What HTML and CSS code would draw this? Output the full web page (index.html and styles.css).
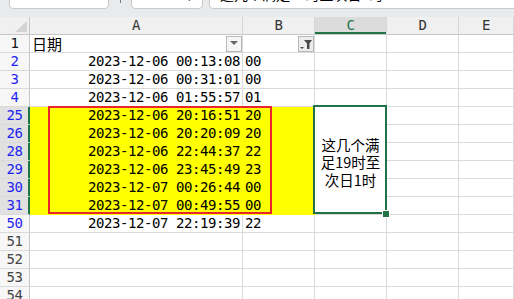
FILE: index.html
```html
<!DOCTYPE html>
<html>
<head>
<meta charset="utf-8">
<link rel="stylesheet" href="styles.css">
</head>
<body>
<div class="toolbar">
  <div class="box namebox"><span>C25</span></div>
  <div class="sep"></div>
  <div class="box fxbox"><span class="ic">✕</span><span class="ic">✓</span><span class="fx">fx</span></div>
  <div class="box formula"><span>这几个满足19时至次日1时</span></div>
</div>
<div class="sheet">
  <div class="c hd corner"><svg width="12" height="11" viewBox="0 0 12 11"><polygon points="12,0 12,11 0,11" fill="#d3d3d3"/></svg></div>
  <div class="c hd">A</div>
  <div class="c hd">B</div>
  <div class="c hd hsel">C</div>
  <div class="c hd">D</div>
  <div class="c hd">E</div>

  <div class="c rh dark">1</div>
  <div class="c a1"><span class="cjk">日期</span><span class="fbtn"><svg width="8" height="5" viewBox="0 0 8 5"><polygon points="0,0 8,0 4,4" fill="#666"/></svg></span></div>
  <div class="c b1"><span class="fbtn on"><svg width="14" height="14" viewBox="0 0 14 14"><polygon points="5,3 13,3 10.5,6.5 10.5,12 8,12 8,6.5" fill="#4a4a4a"/><polygon points="1,10 5,10 3,12" fill="#4a4a4a"/></svg></span></div>
  <div class="c"></div><div class="c"></div><div class="c"></div>

  <div class="c rh blue">2</div><div class="c a">2023-12-06 00:13:08</div><div class="c b">00</div><div class="c"></div><div class="c"></div><div class="c"></div>
  <div class="c rh blue">3</div><div class="c a">2023-12-06 00:31:01</div><div class="c b">00</div><div class="c"></div><div class="c"></div><div class="c"></div>
  <div class="c rh blue">4</div><div class="c a">2023-12-06 01:55:57</div><div class="c b">01</div><div class="c"></div><div class="c"></div><div class="c"></div>

  <div class="c rh blue sel">25</div><div class="c a y">2023-12-06 20:16:51</div><div class="c b y">20</div>
  <div class="c merged"><span class="cjk">这几个满<br>足19时至<br>次日1时</span><span class="handle"></span></div>
  <div class="c"></div><div class="c"></div>
  <div class="c rh blue sel">26</div><div class="c a y">2023-12-06 20:20:09</div><div class="c b y">20</div><div class="c"></div><div class="c"></div>
  <div class="c rh blue sel">28</div><div class="c a y">2023-12-06 22:44:37</div><div class="c b y">22</div><div class="c"></div><div class="c"></div>
  <div class="c rh blue sel">29</div><div class="c a y">2023-12-06 23:45:49</div><div class="c b y">23</div><div class="c"></div><div class="c"></div>
  <div class="c rh blue sel">30</div><div class="c a y">2023-12-07 00:26:44</div><div class="c b y">00</div><div class="c"></div><div class="c"></div>
  <div class="c rh blue sel">31</div><div class="c a y">2023-12-07 00:49:55</div><div class="c b y">00</div><div class="c"></div><div class="c"></div>

  <div class="c rh blue">50</div><div class="c a">2023-12-07 22:19:39</div><div class="c b">22</div><div class="c"></div><div class="c"></div><div class="c"></div>
  <div class="c rh">51</div><div class="c"></div><div class="c"></div><div class="c"></div><div class="c"></div><div class="c"></div>
  <div class="c rh">52</div><div class="c"></div><div class="c"></div><div class="c"></div><div class="c"></div><div class="c"></div>
  <div class="c rh">53</div><div class="c"></div><div class="c"></div><div class="c"></div><div class="c"></div><div class="c"></div>
  <div class="c rh">54</div><div class="c"></div><div class="c"></div><div class="c"></div><div class="c"></div><div class="c"></div>

  <div class="redbox"></div>
</div>
</body>
</html>
```
FILE: styles.css
```css
* { box-sizing: border-box; }
html, body { margin: 0; padding: 0; }
body {
  width: 514px;
  height: 299px;
  overflow: hidden;
  background: #fff;
  font-family: "DejaVu Sans Mono", "Liberation Mono", monospace;
}
.toolbar {
  height: 17px;
  background: #e9eaec;
  display: flex;
  align-items: flex-start;
  padding-left: 9px;
}
.box {
  height: 24px;
  margin-top: -15px;
  background: #fff;
  border: 1px solid #c9c9c9;
  border-radius: 4px;
  overflow: hidden;
  display: flex;
  align-items: flex-end;
  white-space: nowrap;
}
.namebox {
  width: 100px;
  padding: 0 0 7px 8px;
  font-size: 13px;
  line-height: 13px;
  color: #000;
}
.sep {
  width: 1px;
  height: 3px;
  background: #777;
  margin: 0 10px 0 11px;
}
.fxbox {
  width: 72px;
  padding: 0 0 8px 10px;
  gap: 12px;
  font-size: 12px;
  line-height: 12px;
  color: #999;
}
.fxbox .fx { font-family: "Liberation Serif", serif; font-style: italic; color: #333; margin-left: 8px; }
.formula {
  flex: 1;
  margin-left: 6px;
  margin-right: -4px;
  padding: 0 0 7px 10px;
  font-family: "Noto Sans CJK SC", sans-serif;
  font-size: 14px;
  line-height: 14px;
  color: #000;
}
.sheet {
  display: grid;
  grid-template-columns: 30px 213px 72px 72px 72px 55px;
  grid-template-rows: 18px;
  grid-auto-rows: 18px;
  position: relative;
  font-size: 14px;
  letter-spacing: -0.43px;
}
.c {
  border-right: 1px solid #dadada;
  border-bottom: 1px solid #dadada;
  line-height: 17px;
  white-space: nowrap;
  overflow: hidden;
  color: #000;
}
.hd {
  background: #f0f0f0;
  border-bottom-color: #c6c6c6;
  border-right-color: #d6d6d6;
  text-align: center;
  color: #333;
  line-height: 16px;
}
.corner {
  display: flex;
  align-items: flex-end;
  justify-content: flex-end;
  padding: 0 2px 2px 0;
  border-right-color: #c6c6c6;
}
.corner svg { display: block; }
.hsel {
  background: #dcdcdc;
  color: #217346;
  box-shadow: inset 0 -2px #217346;
}
.rh {
  background: #f7f7f7;
  border-right-color: #c6c6c6;
  text-align: center;
  color: #444;
}
.rh.dark { color: #111; }
.rh.blue { color: #1f1ff0; }
.rh.sel {
  background: #e1e1e1;
  border-right-color: #217346;
  box-shadow: inset -1px 0 #217346;
}
.a { text-align: right; padding-right: 2px; }
.b { padding-left: 2px; }
.y { background: #ffff00; border-color: #ffff00; }
.cjk {
  font-family: "Noto Sans CJK SC", sans-serif;
  letter-spacing: 0;
}
.a1 {
  display: flex;
  align-items: center;
  justify-content: space-between;
  padding-left: 2px;
}
.a1 .cjk { font-size: 15px; }
.b1 {
  display: flex;
  align-items: center;
  justify-content: flex-end;
}
.fbtn {
  width: 16px;
  height: 16px;
  border: 1px solid #b8b8b8;
  background: #f6f6f6;
  display: flex;
  align-items: center;
  justify-content: center;
}
.fbtn.on { background: #ededed; }
.fbtn svg { display: block; }
.merged {
  grid-row: span 6;
  position: relative;
  overflow: visible;
  display: flex;
  align-items: center;
  justify-content: center;
  text-align: center;
}
.merged .cjk {
  font-size: 14.5px;
  line-height: 17.5px;
  margin-top: 3px;
}
.merged::after {
  content: "";
  position: absolute;
  top: -2px;
  left: -2px;
  right: -1px;
  bottom: 0;
  border: 2px solid #217346;
}
.handle {
  position: absolute;
  right: -3px;
  bottom: -3px;
  width: 6px;
  height: 6px;
  background: #217346;
  outline: 1px solid #fff;
  z-index: 2;
}
.redbox {
  position: absolute;
  left: 48px;
  top: 89px;
  width: 224px;
  height: 108px;
  border: 2px solid #e8262b;
  pointer-events: none;
}
```
